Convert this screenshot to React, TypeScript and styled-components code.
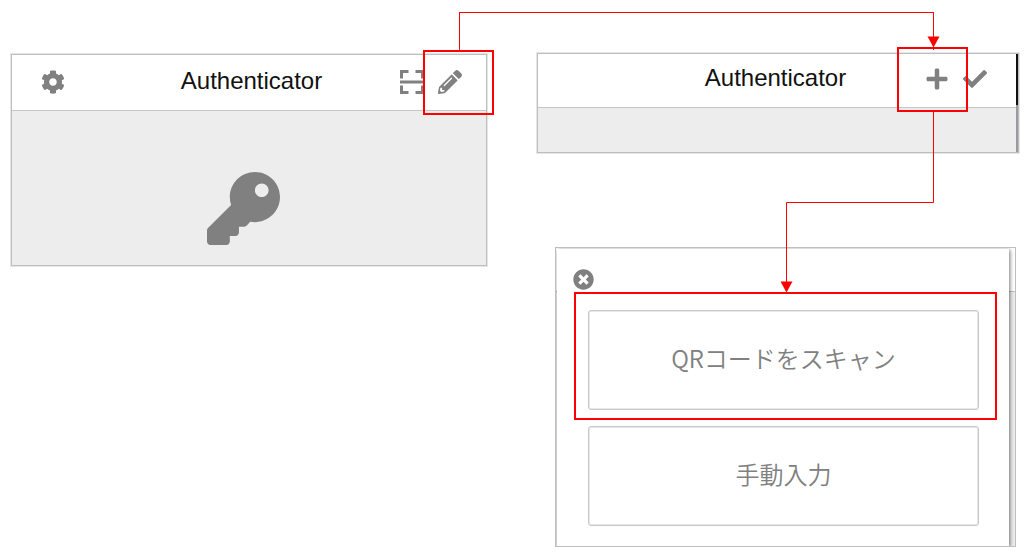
import React from "react";
import styled, { createGlobalStyle } from "styled-components";
import { FaCheck, FaCog, FaKey, FaPencilAlt, FaPlus, FaTimesCircle } from "react-icons/fa";

const GlobalStyle = createGlobalStyle`
  *, *::before, *::after { box-sizing: border-box; }
  body {
    margin: 0;
    background: #fff;
    font-family: "Liberation Sans", Arial, sans-serif;
  }
`;

/* The second and fifth column lines are where the first connector starts and ends. */
const Figure = styled.main`
  display: grid;
  grid-template-columns: 448fr 28px 50px 397fr 85px;
  grid-template-rows: 41px auto;
  padding: 12px 11px 0;
`;

const TopConnector = styled.div`
  position: relative;
  z-index: 2;
  grid-column: 2 / 5;
  grid-row: 1;
  height: 38px;
  border: 1px solid #f00;
  border-bottom: 0;
`;

const ArrowHead = styled.svg`
  position: absolute;
  right: -7px;
  top: 23px;
  fill: #f00;
`;

const StartColumn = styled.section`
  grid-column: 1 / 3;
  grid-row: 2;
  padding-top: 1px;
`;

const EditColumn = styled.section`
  position: relative;
  grid-column: 4 / 6;
  grid-row: 2;
`;

const Panel = styled.div`
  border: 1px solid #bebebe;
  box-shadow: 0 0 0 1px #e6e6e6;
  background: #ededed;
`;

const PanelHeader = styled.header<{ $height: number; $padding: string }>`
  display: grid;
  grid-template-columns: 1fr auto 1fr;
  align-items: center;
  height: ${(p) => p.$height}px;
  padding: ${(p) => p.$padding};
  border-bottom: 1px solid #c6c6c6;
  background: #fff;
`;

const Title = styled.h1`
  grid-column: 2;
  margin: 0;
  padding-bottom: 2px;
  font-size: 24px;
  line-height: 28px;
  font-weight: 400;
  color: #111;
`;

const Actions = styled.div<{ $end?: boolean }>`
  display: flex;
  gap: 14px;
  justify-content: ${(p) => (p.$end ? "flex-end" : "flex-start")};
`;

const IconButton = styled.button`
  position: relative;
  display: grid;
  place-items: center;
  width: 24px;
  height: 24px;
  padding: 0;
  border: 0;
  background: none;
  color: #808080;
  cursor: pointer;
`;

const Highlight = styled.span<{ $inset: string }>`
  position: absolute;
  z-index: 1;
  inset: ${(p) => p.$inset};
  border: 2px solid #f00;
  pointer-events: none;
`;

const KeyArea = styled.div`
  display: flex;
  justify-content: center;
  padding: 61px 11px 20px 0;
  color: #808080;
`;

const EditFrame = styled.div`
  display: grid;
  grid-template-columns: 1fr 2px;
`;

const EmptyArea = styled.div`
  height: 44px;
`;

const FrameEdge = styled.div`
  background: linear-gradient(#111 51px, #9a9aa2 51px);
`;

const DownConnector = styled.svg`
  position: absolute;
  z-index: 2;
  top: 59px;
  right: 85px;
  fill: none;
  stroke: #f00;
`;

const Backdrop = styled.div`
  margin: 94px 3px 0 18px;
  padding: 1px 6px 0 1px;
  overflow: hidden;
  border: 1px solid #bebebe;
  background: linear-gradient(#fff 43px, #c0c0c0 43px, #c0c0c0 44px, #ededed 44px);
`;

const Sheet = styled.div`
  padding: 18px 30px 20px 31px;
  background: #fff;
  box-shadow: 1px 1px 4px rgba(0, 0, 0, 0.55);
`;

const SheetTop = styled.div`
  height: 43px;
  margin-left: -17px;
`;

const Choices = styled.div`
  display: grid;
  gap: 16px;
`;

const Choice = styled.div`
  position: relative;
  display: grid;
`;

const ChoiceButton = styled.button`
  height: 100px;
  padding: 0 0 4px;
  border: 1px solid #c8c8c8;
  border-radius: 3px;
  box-shadow: inset 0 0 0 1px #e8e8e8;
  background: #fff;
  color: #808080;
  font-family: "Noto Sans CJK JP", sans-serif;
  font-size: 24px;
  font-weight: 350;
  line-height: 32px;
  cursor: pointer;
`;

function ScanIcon() {
  return (
    <svg width="24" height="24" viewBox="0 0 24 24" fill="none" stroke="#808080" strokeWidth="3" aria-hidden="true">
      <path d="M1.5 8.5v-7h7M15.5 1.5h7v7M1.5 15.5v7h7M15.5 22.5h7v-7" />
      <path d="M0 12h24" />
    </svg>
  );
}

export default function App() {
  return (
    <>
      <GlobalStyle />
      <Figure>
        <TopConnector>
          <ArrowHead width="13" height="12" viewBox="0 0 13 12" aria-hidden="true">
            <path d="M0.5 0.5h12l-6 11z" />
          </ArrowHead>
        </TopConnector>

        <StartColumn>
          <Panel>
            <PanelHeader $height={56} $padding="0 24px 1px 29px">
              <Actions>
                <IconButton aria-label="Settings"><FaCog size={24} /></IconButton>
              </Actions>
              <Title>Authenticator</Title>
              <Actions $end>
                <IconButton aria-label="Scan"><ScanIcon /></IconButton>
                <IconButton aria-label="Edit">
                  <FaPencilAlt size={24} />
                  <Highlight $inset="-20px -32px -21px -15px" />
                </IconButton>
              </Actions>
            </PanelHeader>
            <KeyArea><FaKey size={73} /></KeyArea>
          </Panel>
        </StartColumn>

        <EditColumn>
          <Panel>
            <EditFrame>
              <div>
                <PanelHeader $height={54} $padding="0 29px 3px 26px">
                  <Title>Authenticator</Title>
                  <Actions $end>
                    <IconButton aria-label="Add">
                      <FaPlus size={24} />
                      <Highlight $inset="-20px -19px -21px -28px" />
                    </IconButton>
                    <IconButton aria-label="Done"><FaCheck size={24} /></IconButton>
                  </Actions>
                </PanelHeader>
                <EmptyArea />
              </div>
              <FrameEdge />
            </EditFrame>
          </Panel>

          <DownConnector width="154" height="181" viewBox="0 0 154 181" aria-hidden="true">
            <path d="M153.5 0V90.5H6.5V170" />
            <path d="M0.5 169.5h12l-6 11z" fill="#f00" stroke="none" />
          </DownConnector>

          <Backdrop>
            <Sheet>
              <SheetTop>
                <IconButton aria-label="Close"><FaTimesCircle size={21} /></IconButton>
              </SheetTop>
              <Choices>
                <Choice>
                  <ChoiceButton>QRコードをスキャン</ChoiceButton>
                  <Highlight $inset="-18px -18px -10px -14px" />
                </Choice>
                <Choice>
                  <ChoiceButton>手動入力</ChoiceButton>
                </Choice>
              </Choices>
            </Sheet>
          </Backdrop>
        </EditColumn>
      </Figure>
    </>
  );
}
